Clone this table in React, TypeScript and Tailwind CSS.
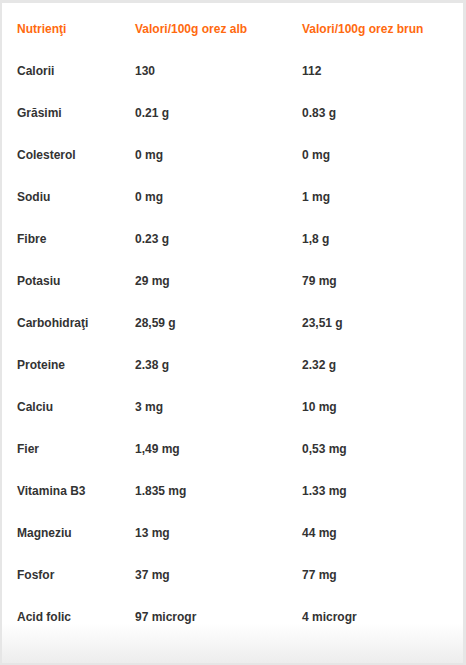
import React from "react";

const rows: [string, string, string][] = [
  ["Calorii", "130", "112"],
  ["Grăsimi", "0.21 g", "0.83 g"],
  ["Colesterol", "0 mg", "0 mg"],
  ["Sodiu", "0 mg", "1 mg"],
  ["Fibre", "0.23 g", "1,8 g"],
  ["Potasiu", "29 mg", "79 mg"],
  ["Carbohidraţi", "28,59 g", "23,51 g"],
  ["Proteine", "2.38 g", "2.32 g"],
  ["Calciu", "3 mg", "10 mg"],
  ["Fier", "1,49 mg", "0,53 mg"],
  ["Vitamina B3", "1.835 mg", "1.33 mg"],
  ["Magneziu", "13 mg", "44 mg"],
  ["Fosfor", "37 mg", "77 mg"],
  ["Acid folic", "97 microgr", "4 microgr"],
];

export default function App() {
  return (
    <div
      className="w-[466px] h-[665px] bg-[#e6e6e6] pt-[3px] pl-[2px] pr-[3px] pb-[2px]"
      style={{ fontFamily: '"Liberation Sans", Arial, sans-serif' }}
    >
      <div className="h-full bg-gradient-to-b from-white from-[94%] to-[#ededed] pt-[5px] pl-[15px]">
        <div className="flex h-[42px] items-center text-[12px] font-bold text-[#ff6a10]">
          <div className="w-[118px]">Nutrienţi</div>
          <div className="w-[167px]">Valori/100g orez alb</div>
          <div>Valori/100g orez brun</div>
        </div>
        {rows.map((r) => (
          <div key={r[0]} className="flex h-[42px] items-center text-[12px] font-bold text-[#333333]">
            <div className="w-[118px]">{r[0]}</div>
            <div className="w-[167px]">{r[1]}</div>
            <div>{r[2]}</div>
          </div>
        ))}
      </div>
    </div>
  );
}
